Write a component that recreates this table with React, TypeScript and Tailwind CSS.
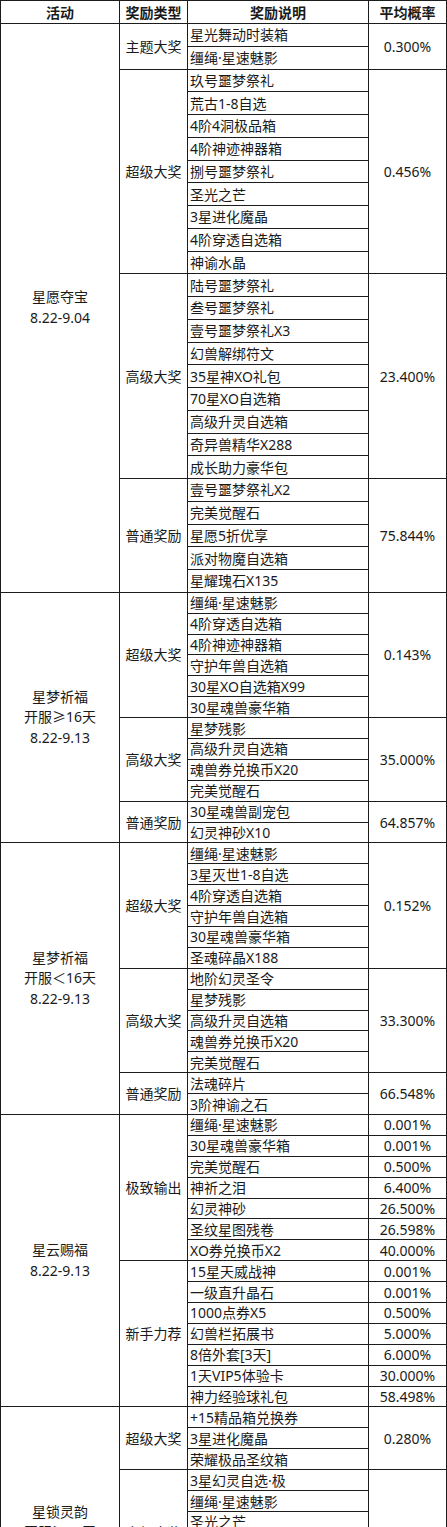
import React from "react";

type Item = { name: string; rate?: string };
type Tier = { type: string; rate?: string; items: Item[] };
type Group = { title: string[]; rowH: string; tiers: Tier[] };

const it = (...names: string[]): Item[] => names.map((name) => ({ name }));

const groups: Group[] = [
  {
    title: ["星愿夺宝", "8.22-9.04"],
    rowH: "h-[22.76px]",
    tiers: [
      { type: "主题大奖", rate: "0.300%", items: it("星光舞动时装箱", "缰绳·星速魅影") },
      {
        type: "超级大奖",
        rate: "0.456%",
        items: it(
          "玖号噩梦祭礼",
          "荒古1-8自选",
          "4阶4洞极品箱",
          "4阶神迹神器箱",
          "捌号噩梦祭礼",
          "圣光之芒",
          "3星进化魔晶",
          "4阶穿透自选箱",
          "神谕水晶"
        ),
      },
      {
        type: "高级大奖",
        rate: "23.400%",
        items: it(
          "陆号噩梦祭礼",
          "叁号噩梦祭礼",
          "壹号噩梦祭礼X3",
          "幻兽解绑符文",
          "35星神XO礼包",
          "70星XO自选箱",
          "高级升灵自选箱",
          "奇异兽精华X288",
          "成长助力豪华包"
        ),
      },
      {
        type: "普通奖励",
        rate: "75.844%",
        items: it("壹号噩梦祭礼X2", "完美觉醒石", "星愿5折优享", "派对物魔自选箱", "星耀瑰石X135"),
      },
    ],
  },
  {
    title: ["星梦祈福", "开服≥16天", "8.22-9.13"],
    rowH: "h-[20.9px]",
    tiers: [
      {
        type: "超级大奖",
        rate: "0.143%",
        items: it("缰绳·星速魅影", "4阶穿透自选箱", "4阶神迹神器箱", "守护年兽自选箱", "30星XO自选箱X99", "30星魂兽豪华箱"),
      },
      { type: "高级大奖", rate: "35.000%", items: it("星梦残影", "高级升灵自选箱", "魂兽券兑换币X20", "完美觉醒石") },
      { type: "普通奖励", rate: "64.857%", items: it("30星魂兽副宠包", "幻灵神砂X10") },
    ],
  },
  {
    title: ["星梦祈福", "开服＜16天", "8.22-9.13"],
    rowH: "h-[20.9px]",
    tiers: [
      {
        type: "超级大奖",
        rate: "0.152%",
        items: it("缰绳·星速魅影", "3星灭世1-8自选", "4阶穿透自选箱", "守护年兽自选箱", "30星魂兽豪华箱", "圣魂碎晶X188"),
      },
      { type: "高级大奖", rate: "33.300%", items: it("地阶幻灵圣令", "星梦残影", "高级升灵自选箱", "魂兽券兑换币X20", "完美觉醒石") },
      { type: "普通奖励", rate: "66.548%", items: it("法魂碎片", "3阶神谕之石") },
    ],
  },
  {
    title: ["星云赐福", "8.22-9.13"],
    rowH: "h-[20.9px]",
    tiers: [
      {
        type: "极致输出",
        items: [
          { name: "缰绳·星速魅影", rate: "0.001%" },
          { name: "30星魂兽豪华箱", rate: "0.001%" },
          { name: "完美觉醒石", rate: "0.500%" },
          { name: "神祈之泪", rate: "6.400%" },
          { name: "幻灵神砂", rate: "26.500%" },
          { name: "圣纹星图残卷", rate: "26.598%" },
          { name: "XO券兑换币X2", rate: "40.000%" },
        ],
      },
      {
        type: "新手力荐",
        items: [
          { name: "15星天威战神", rate: "0.001%" },
          { name: "一级直升晶石", rate: "0.001%" },
          { name: "1000点券X5", rate: "0.500%" },
          { name: "幻兽栏拓展书", rate: "5.000%" },
          { name: "8倍外套[3天]", rate: "6.000%" },
          { name: "1天VIP5体验卡", rate: "30.000%" },
          { name: "神力经验球礼包", rate: "58.498%" },
        ],
      },
    ],
  },
  {
    title: ["星锁灵韵", "开服≥16天", "8.22-9.13"],
    rowH: "h-[20.9px]",
    tiers: [
      { type: "超级大奖", rate: "0.280%", items: it("+15精品箱兑换券", "3星进化魔晶", "荣耀极品圣纹箱") },
      {
        type: "高级大奖",
        rate: "",
        items: it("3星幻灵自选·极", "缰绳·星速魅影", "圣光之芒", "4阶穿透自选箱", "守护年兽自选箱", "完美觉醒石"),
      },
      { type: "普通奖励", rate: "", items: it("幻灵神砂X10", "法魂碎片", "星梦残影") },
    ],
  },
];

const line = "border-[#1c1c1c]";

function TierBlock({ tier, rowH }: { tier: Tier; rowH: string }) {
  const shared = tier.rate !== undefined;
  return (
    <div className="flex">
      <div className={`w-[68px] shrink-0 border-r border-b ${line} flex items-center justify-center`}>
        {tier.type}
      </div>
      {shared ? (
        <>
          <div className="w-[181px] shrink-0 flex flex-col">
            {tier.items.map((item, i) => (
              <div key={i} className={`${rowH} border-r border-b ${line} flex items-center pl-[2px] whitespace-nowrap`}>
                {item.name}
              </div>
            ))}
          </div>
          <div className={`w-[78px] shrink-0 border-r border-b ${line} flex items-center justify-center`}>
            {tier.rate}
          </div>
        </>
      ) : (
        <div className="flex flex-col">
          {tier.items.map((item, i) => (
            <div key={i} className="flex">
              <div className={`w-[181px] ${rowH} border-r border-b ${line} flex items-center pl-[2px] whitespace-nowrap`}>
                {item.name}
              </div>
              <div className={`w-[78px] ${rowH} border-r border-b ${line} flex items-center justify-center`}>
                {item.rate}
              </div>
            </div>
          ))}
        </div>
      )}
    </div>
  );
}

export default function App() {
  return (
    <div
      className="w-[447px] h-[1527px] overflow-hidden bg-white text-[14px] text-[#1a1a1a]"
      style={{ fontFamily: '"Noto Sans", "Noto Sans CJK SC", sans-serif' }}
    >
      <div className={`border-l border-t ${line}`}>
        {/* Header */}
        <div className="flex h-[23px] font-bold">
          <div className={`w-[119px] border-r border-b ${line} flex items-center justify-center`}>活动</div>
          <div className={`w-[68px] border-r border-b ${line} flex items-center justify-center`}>奖励类型</div>
          <div className={`w-[181px] border-r border-b ${line} flex items-center justify-center`}>奖励说明</div>
          <div className={`w-[78px] border-r border-b ${line} flex items-center justify-center`}>平均概率</div>
        </div>

        {groups.map((g, gi) => (
          <div key={gi} className="flex">
            <div className={`w-[119px] shrink-0 border-r border-b ${line} flex flex-col items-center justify-center leading-[20.5px]`}>
              {g.title.map((t, ti) => (
                <div key={ti}>{t}</div>
              ))}
            </div>
            <div className="flex flex-col">
              {g.tiers.map((tier, ti) => (
                <TierBlock key={ti} tier={tier} rowH={g.rowH} />
              ))}
            </div>
          </div>
        ))}
      </div>
    </div>
  );
}
